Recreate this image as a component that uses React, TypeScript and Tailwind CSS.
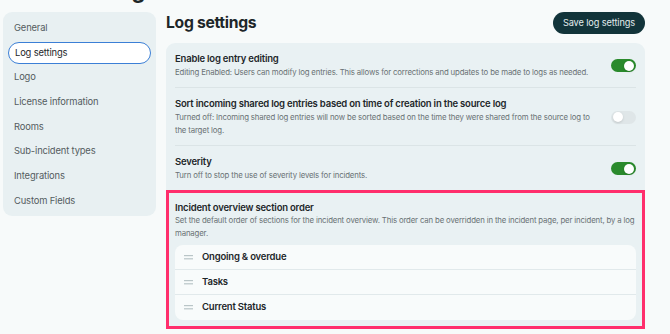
const NAV_ITEMS = [
  "General",
  "Log settings",
  "Logo",
  "License information",
  "Rooms",
  "Sub-incident types",
  "Integrations",
  "Custom Fields",
];

const SETTINGS = [
  {
    title: "Enable log entry editing",
    description:
      "Editing Enabled: Users can modify log entries. This allows for corrections and updates to be made to logs as needed.",
    enabled: true,
  },
  {
    title: "Sort incoming shared log entries based on time of creation in the source log",
    description:
      "Turned off: Incoming shared log entries will now be sorted based on the time they were shared from the source log to the target log.",
    enabled: false,
  },
  {
    title: "Severity",
    description: "Turn off to stop the use of severity levels for incidents.",
    enabled: true,
  },
];

const SECTIONS = ["Ongoing & overdue", "Tasks", "Current Status"];

const Toggle = ({ enabled }: { enabled: boolean }) => (
  <div
    className={`flex h-[13px] w-[25px] shrink-0 items-center rounded-full px-[2px] ${
      enabled ? "justify-end bg-[#2a8a2c]" : "justify-start bg-[#dfe6e8]"
    }`}
  >
    <div className="h-[10px] w-[10px] rounded-full bg-white shadow-sm" />
  </div>
);

const DragHandle = () => (
  <svg width="9" height="5" viewBox="0 0 9 5" className="shrink-0">
    <rect x="0" y="0" width="9" height="1.2" fill="#b9c5c7" />
    <rect x="0" y="3.2" width="9" height="1.2" fill="#b9c5c7" />
  </svg>
);

export default function App() {
  return (
    <div className="h-[334px] w-[670px] overflow-hidden bg-[#f7fafa] font-['Inter',sans-serif] text-[#1d2629]">
      <div className="flex gap-[10px] pl-[3px]">
        {/* sidebar */}
        <div className="flex w-[153px] flex-col">
          <h1 className="-mt-[21px] mb-[11px] pl-[66px] text-[22px] font-bold leading-[22px]">Settings</h1>
          <nav className="flex flex-col gap-[2.7px] rounded-[9px] bg-[#e8f0f2] px-[5px] pt-[5px] pb-[4px]">
            {NAV_ITEMS.map((item) => (
              <div
                key={item}
                className={`flex h-[22px] items-center rounded-full px-[6px] text-[9.4px] tracking-[-0.15px] ${
                  item === "Log settings"
                    ? "border-[1.5px] border-[#3b7fd6] bg-white px-[4.5px] text-[#1d2629]"
                    : "text-[#545c5f]"
                }`}
              >
                {item}
              </div>
            ))}
          </nav>
        </div>

        {/* main */}
        <main className="flex w-[479px] flex-col pt-[12px]">
          <div className="mb-[9px] flex h-[22px] items-center justify-between">
            <h2 className="text-[15.7px] font-bold tracking-[-0.3px]">Log settings</h2>
            <button className="h-[22px] w-[92px] rounded-full bg-[#12343a] text-[9.2px] tracking-[-0.1px] text-[#e3eded]">
              Save log settings
            </button>
          </div>

          <div className="rounded-t-[9px] bg-[#e9f1f3] px-[9px]">
            {SETTINGS.map((s, i) => (
              <div
                key={s.title}
                className={`flex items-center justify-between gap-[15px] pt-[9px] pb-[8px] ${
                  i < SETTINGS.length - 1 ? "border-b border-[#dbe4e6]" : ""
                }`}
              >
                <div className="flex flex-col gap-[1px]">
                  <div className="text-[9.5px] font-semibold leading-[13px] tracking-[-0.2px]">{s.title}</div>
                  <div className="text-[7.8px] leading-[13px] tracking-[-0.15px] text-[#697275]">{s.description}</div>
                </div>
                <Toggle enabled={s.enabled} />
              </div>
            ))}
          </div>

          <div className="border-[3px] border-[#ff2e6c] bg-[#e9f1f3] px-[6px] pt-[8px] pb-[6px]">
            <div className="text-[9.5px] font-semibold leading-[13px] tracking-[-0.2px]">
              Incident overview section order
            </div>
            <div className="text-[7.8px] leading-[13px] tracking-[-0.15px] text-[#697275]">
              Set the default order of sections for the incident overview. This order can be overridden in the incident
              page, per incident, by a log manager.
            </div>
            <div className="mt-[5px] flex flex-col rounded-[8px] bg-[#f8fbfb]">
              {SECTIONS.map((section, i) => (
                <div
                  key={section}
                  className={`flex h-[25px] items-center gap-[9px] pl-[9px] ${
                    i < SECTIONS.length - 1 ? "border-b border-[#e1e9eb]" : ""
                  }`}
                >
                  <DragHandle />
                  <span className="text-[9.5px] font-semibold tracking-[-0.2px]">{section}</span>
                </div>
              ))}
            </div>
          </div>
        </main>
      </div>
    </div>
  );
}
